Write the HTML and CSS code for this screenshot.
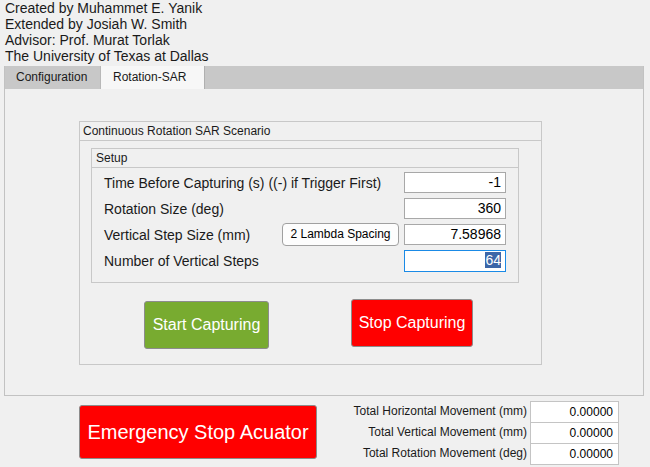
FILE: index.html
```html
<!DOCTYPE html>
<html>
<head>
<meta charset="utf-8">
<link rel="stylesheet" href="styles.css">
</head>
<body>
<div class="credits">
  <div>Created by Muhammet E. Yanik</div>
  <div>Extended by Josiah W. Smith</div>
  <div>Advisor: Prof. Murat Torlak</div>
  <div>The University of Texas at Dallas</div>
</div>
<div class="tabgroup">
  <div class="tabstrip">
    <div class="tab tab-config">Configuration</div>
    <div class="tab tab-active">Rotation-SAR</div>
  </div>
  <div class="tabbody">
    <div class="panel scenario">
      <div class="ptitle">Continuous Rotation SAR Scenario</div>
      <div class="scenario-body">
        <div class="panel setup">
          <div class="ptitle setup-title">Setup</div>
          <div class="rows">
            <div class="row">
              <span class="label">Time Before Capturing (s) ((-) if Trigger First)</span>
              <span class="field">-1</span>
            </div>
            <div class="row">
              <span class="label">Rotation Size (deg)</span>
              <span class="field">360</span>
            </div>
            <div class="row">
              <span class="label">Vertical Step Size (mm)</span>
              <span class="pbtn">2 Lambda Spacing</span>
              <span class="field">7.58968</span>
            </div>
            <div class="row">
              <span class="label">Number of Vertical Steps</span>
              <span class="field field-focus"><span class="sel">64</span></span>
            </div>
          </div>
        </div>
        <div class="actions">
          <div class="bigbtn start">Start Capturing</div>
          <div class="bigbtn stop">Stop Capturing</div>
        </div>
      </div>
    </div>
  </div>
</div>
<div class="bottom">
  <div class="emergency">Emergency Stop Acuator</div>
  <div class="stats">
    <span class="slabel">Total Horizontal Movement (mm)</span><span class="sval">0.00000</span>
    <span class="slabel">Total Vertical Movement (mm)</span><span class="sval">0.00000</span>
    <span class="slabel">Total Rotation Movement (deg)</span><span class="sval">0.00000</span>
  </div>
</div>
</body>
</html>
```

FILE: styles.css
```css
* { box-sizing: border-box; }
html, body {
  margin: 0;
  padding: 0;
  background: #f0f0f0;
  font-family: "Liberation Sans", Arial, sans-serif;
  color: #000;
}
body { width: 650px; height: 467px; overflow: hidden; }

.credits {
  padding-left: 5px;
  font-size: 14px;
  line-height: 16px;
  margin-bottom: 2px;
  color: #1a1a1a;
}

.tabgroup {
  margin-left: 4px;
  width: 640px;
  height: 330px;
  border: 1px solid #c2c2c2;
  border-top: none;
  display: flex;
  flex-direction: column;
}
.tabstrip {
  height: 23px;
  background: #c8c8c8;
  display: flex;
  padding-left: 1px;
}
.tab {
  font-size: 12px;
  line-height: 23px;
  height: 23px;
  color: #1a1a1a;
}
.tab-config {
  width: 95px;
  padding-left: 10px;
  border-right: 1px solid #b8b8b8;
}
.tab-active {
  width: 104px;
  padding-left: 12px;
  background: #f7f7f7;
  border-right: 1px solid #b0b0b0;
}
.tabbody {
  flex: 1;
  background: #f0f0f0;
  padding: 32px 0 0 74px;
}

.panel {
  border: 1px solid #c8c8c8;
}
.scenario {
  width: 463px;
  height: 244px;
  display: flex;
  flex-direction: column;
}
.ptitle {
  font-size: 12px;
  height: 19px;
  line-height: 18px;
  padding-left: 3px;
  border-bottom: 1px solid #c8c8c8;
  color: #1a1a1a;
}
.scenario-body {
  padding: 7px 0 0 11px;
}
.setup {
  width: 428px;
  height: 135px;
}
.setup-title { padding-left: 4px; }

.rows {
  padding: 4px 12px 0 12px;
  display: flex;
  flex-direction: column;
  gap: 5px;
}
.row {
  display: flex;
  align-items: center;
  height: 21px;
}
.label {
  font-size: 14px;
  flex: 1;
  color: #1a1a1a;
}
.field {
  width: 102px;
  height: 21px;
  border: 1px solid #a8a8a8;
  background: #fff;
  font-size: 14px;
  line-height: 19px;
  text-align: right;
  padding-right: 4px;
}
.field-focus {
  border-color: #1a8ae6;
  height: 22px;
}
.sel {
  background: #3c66a8;
  color: #fff;
}
.pbtn {
  width: 117px;
  height: 23px;
  margin-right: 5px;
  border: 1px solid #a0a0a0;
  border-radius: 4px;
  background: #fdfdfd;
  font-size: 12px;
  line-height: 21px;
  text-align: center;
}

.actions {
  display: flex;
  align-items: flex-start;
  padding-left: 53px;
}
.bigbtn {
  height: 48px;
  border: 1px solid #8c8c8c;
  border-radius: 3px;
  color: #fff;
  font-size: 16px;
  display: flex;
  align-items: center;
  justify-content: center;
}
.start {
  width: 125px;
  margin-top: 18px;
  background: #78ab30;
}
.stop {
  width: 122px;
  margin-top: 16px;
  margin-left: 82px;
  background: #ff0000;
}

.bottom {
  display: flex;
  align-items: flex-start;
  padding-top: 5px;
}
.emergency {
  margin: 4px 0 0 79px;
  width: 238px;
  height: 54px;
  background: #ff0000;
  border: 1px solid #8c8c8c;
  border-radius: 3px;
  color: #fff;
  font-size: 20px;
  display: flex;
  align-items: center;
  justify-content: center;
}
.stats {
  margin-left: auto;
  margin-right: 31px;
  display: grid;
  grid-template-columns: auto 89px;
  grid-auto-rows: 21px;
  row-gap: 0;
}
.slabel {
  font-size: 12px;
  line-height: 21px;
  text-align: right;
  padding-right: 3px;
  color: #1a1a1a;
}
.sval {
  height: 22px;
  border: 1px solid #c4c4c4;
  background: #fff;
  font-size: 12px;
  line-height: 20px;
  text-align: right;
  padding-right: 5px;
}
```
